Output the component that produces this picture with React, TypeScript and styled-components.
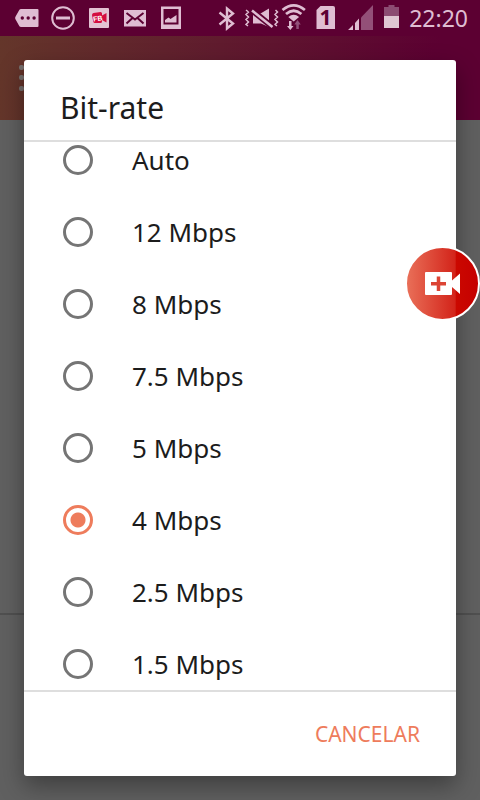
import React, { useState } from 'react';
import styled, { createGlobalStyle } from 'styled-components';

const GlobalStyle = createGlobalStyle`
  * { box-sizing: border-box; }
  body { margin: 0; background: #606060; font-family: "Noto Sans", "Open Sans", sans-serif; }
`;

const ACCENT = '#ee7c5c';
const STATUS_ICON = '#dfbdd2';

const Screen = styled.div`
  position: relative;
  display: flex;
  flex-direction: column;
  min-height: 100vh;
`;

const StatusBar = styled.header`
  display: flex;
  justify-content: space-between;
  height: 36px;
  padding: 0 12px 0 15px;
  background: #5c0032;
  color: ${STATUS_ICON};
`;

const StatusGroup = styled.div<{ $gap: number }>`
  display: flex;
  align-items: center;
  gap: ${(p) => p.$gap}px;
`;

const StatusIcon = styled.svg`
  display: block;
  flex: none;
  height: 36px;
`;

const Clock = styled.time`
  margin-left: 4px;
  font-size: 23px;
  line-height: 36px;
`;

const AppBar = styled.div`
  display: flex;
  align-items: center;
  height: 84px;
  padding-left: 19px;
  background: linear-gradient(90deg, #64362a 0%, #5c0032 92%);
`;

const PageBody = styled.main`
  display: flex;
  flex: 1;
  flex-direction: column;
`;

const PagePanel = styled.section`
  flex: 1;
`;

const PageFooter = styled.section`
  height: 187px;
  border-top: 2px solid #505050;
`;

const Overlay = styled.div`
  position: absolute;
  inset: 36px 0 0;
  display: flex;
  padding: 24px;
`;

const Dialog = styled.section`
  display: flex;
  flex: 1;
  flex-direction: column;
  border-radius: 3px;
  background: #fff;
  box-shadow: 0 10px 24px rgba(0, 0, 0, 0.36);
`;

const DialogTitle = styled.h1`
  margin: 0;
  padding: 28px 36px 12px;
  border-bottom: 2px solid #dedede;
  color: #1c1c1c;
  font-size: 30px;
  font-weight: 400;
  line-height: 40px;
`;

const OptionList = styled.div`
  display: flex;
  flex: 1;
  flex-direction: column;
  gap: 36px;
  padding: 0 36px 8px;
`;

const Option = styled.label`
  display: flex;
  align-items: center;
  gap: 39px;
  height: 36px;
  padding-left: 3px;
  color: #1c1c1c;
  font-size: 26px;
  line-height: 36px;
  cursor: pointer;
`;

const Radio = styled.input`
  flex: none;
  appearance: none;
  width: 30px;
  height: 30px;
  margin: 0;
  border: 3px solid #757575;
  border-radius: 50%;
  background: #fff;

  &:checked {
    border-color: ${ACCENT};
    background: radial-gradient(circle, ${ACCENT} 7px, #fff 8px);
  }
`;

const DialogActions = styled.footer`
  display: flex;
  align-items: center;
  justify-content: flex-end;
  height: 86px;
  padding: 0 36px;
  border-top: 2px solid #dedede;
`;

const TextButton = styled.button`
  padding: 0;
  border: 0;
  background: none;
  color: ${ACCENT};
  font: 400 21px/36px "Noto Sans", sans-serif;
  cursor: pointer;
`;

const RecordButton = styled.button`
  position: absolute;
  top: 246px;
  right: 0;
  display: flex;
  align-items: center;
  justify-content: center;
  width: 75px;
  height: 75px;
  padding: 0;
  border: 2px solid #fff;
  border-radius: 50%;
  background: linear-gradient(90deg, #e96f58 0%, #d3241a 68%, #cb0800 69%, #c50000 100%);
  cursor: pointer;
`;

const rates = ['Auto', '12 Mbps', '8 Mbps', '7.5 Mbps', '5 Mbps', '4 Mbps', '2.5 Mbps', '1.5 Mbps'];

const Notifications = () => (
  <StatusGroup $gap={12}>
    <StatusIcon width="24" viewBox="0 0 24 36" aria-hidden="true">
      <path fill={STATUS_ICON} d="M6 9h16.500q1 0 1 1v16q0 1-1 1H6q-1 0-1.600-.8L.6 19.500q-.9-1.500 0-3L4.400 9.800Q5 9 6 9z" />
      <g fill="#5c0032"><circle cx="7.300" cy="18" r="1.700" /><circle cx="13.200" cy="18" r="1.700" /><circle cx="19.100" cy="18" r="1.700" /></g>
    </StatusIcon>
    <StatusIcon width="24" viewBox="0 0 24 36" fill="none" stroke={STATUS_ICON} aria-hidden="true">
      <circle cx="12" cy="18" r="10.800" strokeWidth="2" />
      <path d="M5 18h14" strokeWidth="3" />
    </StatusIcon>
    <StatusIcon width="24" viewBox="0 0 24 36" aria-hidden="true">
      <rect x="2" y="8" width="20" height="20" rx="1" fill="#e3c3d3" />
      <path fill="#d40d40" d="M6.500 13l7-1q1.500 0 1.500 1.500v2l4.500-2.500v9.500l-4.500-2.500v1.500q0 1.500-1.500 1.500H8q-1.500 0-1.800-1.500L5 15q0-1.700 1.500-2z" />
      <text x="6" y="21" fill="#fff" fontFamily="Liberation Sans, sans-serif" fontSize="7" fontWeight="700" transform="rotate(-8 10 18)">FB</text>
    </StatusIcon>
    <StatusIcon width="24" viewBox="0 0 24 36" aria-hidden="true">
      <rect x="1" y="10" width="22" height="16.500" fill={STATUS_ICON} />
      <path d="M3.500 13l8.500 6.500 8.500-6.500M3.500 23.500l6-5.500M20.500 23.500l-6-5.500" fill="none" stroke="#5c0032" strokeWidth="2" />
    </StatusIcon>
    <StatusIcon width="24" viewBox="0 0 24 36" aria-hidden="true">
      <path fillRule="evenodd" fill={STATUS_ICON} d="M2 6.500h20v22.500H2zM4.500 9v15.500h15V9z" />
      <path fill={STATUS_ICON} d="M6 22.500V20l3.500-2.500 2 1.500 6-4v7.500z" />
    </StatusIcon>
  </StatusGroup>
);

const SystemStatus = () => (
  <StatusGroup $gap={0}>
    <StatusIcon width="25" viewBox="215 0 25 36" fill="none" stroke={STATUS_ICON} strokeWidth="2.400" aria-hidden="true">
      <path d="M219.500 12.500l13.500 11-6 5V8.500l6 5-13.500 11" />
    </StatusIcon>
    <StatusIcon width="40" viewBox="240 0 40 36" aria-hidden="true">
      <path d="M246 10l2.500 2-2.500 2.500 2.500 2.500-2.500 2.500 2.500 2.500-2.500 2.500 2 1.500M275.500 10l2 2-2.500 2.500 2.500 2.500-2.500 2.500 2.500 2.500-2.500 2.500 2 1.500" fill="none" stroke={STATUS_ICON} strokeWidth="1.500" />
      <path fill={STATUS_ICON} d="M253 13.500h7.500l8.500-5V27l-8-3.500h-8z" />
      <path d="M250.500 9L272.500 27" stroke="#5c0032" strokeWidth="6" />
      <path d="M252 10.500L272.500 27" stroke={STATUS_ICON} strokeWidth="2.500" />
    </StatusIcon>
    <StatusIcon width="30" viewBox="280 0 30 36" fill="none" stroke={STATUS_ICON} strokeWidth="2.700" aria-hidden="true">
      <path d="M282.500 10q11.200-9.400 22.400 0M286 14q7.700-6.500 15.400 0" />
      <path fill={STATUS_ICON} stroke="none" d="M288.300 17q5.400-4.500 10.800 0L293.700 21.500z" />
      <path fill={STATUS_ICON} stroke="none" d="M289 21h2.500v5h2l-3.200 4-3.300-4h2z" />
      <path fill="#92517a" stroke="none" d="M297.500 20l3.300 4.500h-2v4.500h-2.500v-4.500h-2z" />
    </StatusIcon>
    <StatusIcon width="32" viewBox="310 0 32 36" aria-hidden="true">
      <path fill={STATUS_ICON} d="M320.500 6H333q2 0 2 2v21h-18.500V10z" />
      <text x="325.500" y="25" fill="#5c0032" fontFamily="Noto Sans, sans-serif" fontSize="21" fontWeight="700" textAnchor="middle">1</text>
    </StatusIcon>
    <StatusIcon width="36" viewBox="342 0 36 36" aria-hidden="true">
      <path fill="#935078" d="M361 17.500L373 5v25h-12z" />
      <path fill={STATUS_ICON} d="M348 30l5-5v5zM355 23l4-4.500V30h-4z" />
    </StatusIcon>
    <StatusIcon width="27" viewBox="378 0 27 36" aria-hidden="true">
      <path fill="#8c4c72" d="M384 7h4.500V5h6v2h4.500v9h-15z" />
      <path fill="#dfc6d2" d="M384 16h15v12h-15z" />
    </StatusIcon>
    <Clock>22:20</Clock>
  </StatusGroup>
);

const MenuIcon = () => (
  <svg width="36" height="30" viewBox="0 0 36 30" aria-hidden="true">
    <g fill="#77706e">
      <rect y="2" width="5" height="5" rx="2" /><rect x="9" y="3" width="24" height="3" />
      <rect y="12" width="5" height="5" rx="2" /><rect x="9" y="13" width="24" height="3" />
      <rect y="23" width="5" height="5" rx="2" /><rect x="9" y="24" width="24" height="3" />
    </g>
  </svg>
);

export default function App() {
  const [rate, setRate] = useState('4 Mbps');
  return (
    <>
      <GlobalStyle />
      <Screen>
        <StatusBar>
          <Notifications />
          <SystemStatus />
        </StatusBar>
        <AppBar><MenuIcon /></AppBar>
        <PageBody>
          <PagePanel />
          <PageFooter />
        </PageBody>
        <Overlay>
          <Dialog role="dialog" aria-labelledby="dialog-title">
            <DialogTitle id="dialog-title">Bit-rate</DialogTitle>
            <OptionList role="radiogroup" aria-labelledby="dialog-title">
              {rates.map((r) => (
                <Option key={r}>
                  <Radio type="radio" name="rate" value={r} checked={rate === r} onChange={() => setRate(r)} />
                  {r}
                </Option>
              ))}
            </OptionList>
            <DialogActions>
              <TextButton type="button">CANCELAR</TextButton>
            </DialogActions>
          </Dialog>
        </Overlay>
        <RecordButton type="button" aria-label="Record">
          <svg width="36" height="24" viewBox="0 0 36 24" aria-hidden="true">
            <path fill="#fff" d="M1 0h25q1 0 1 1v7.500L35 1.500v20.500l-8-7V22q0 1-1 1H1q-1 0-1-1V1q0-1 1-1z" />
            <path d="M13.500 4.500v14.500M6 11.700h15" stroke="#dc4434" strokeWidth="3.500" />
          </svg>
        </RecordButton>
      </Screen>
    </>
  );
}
